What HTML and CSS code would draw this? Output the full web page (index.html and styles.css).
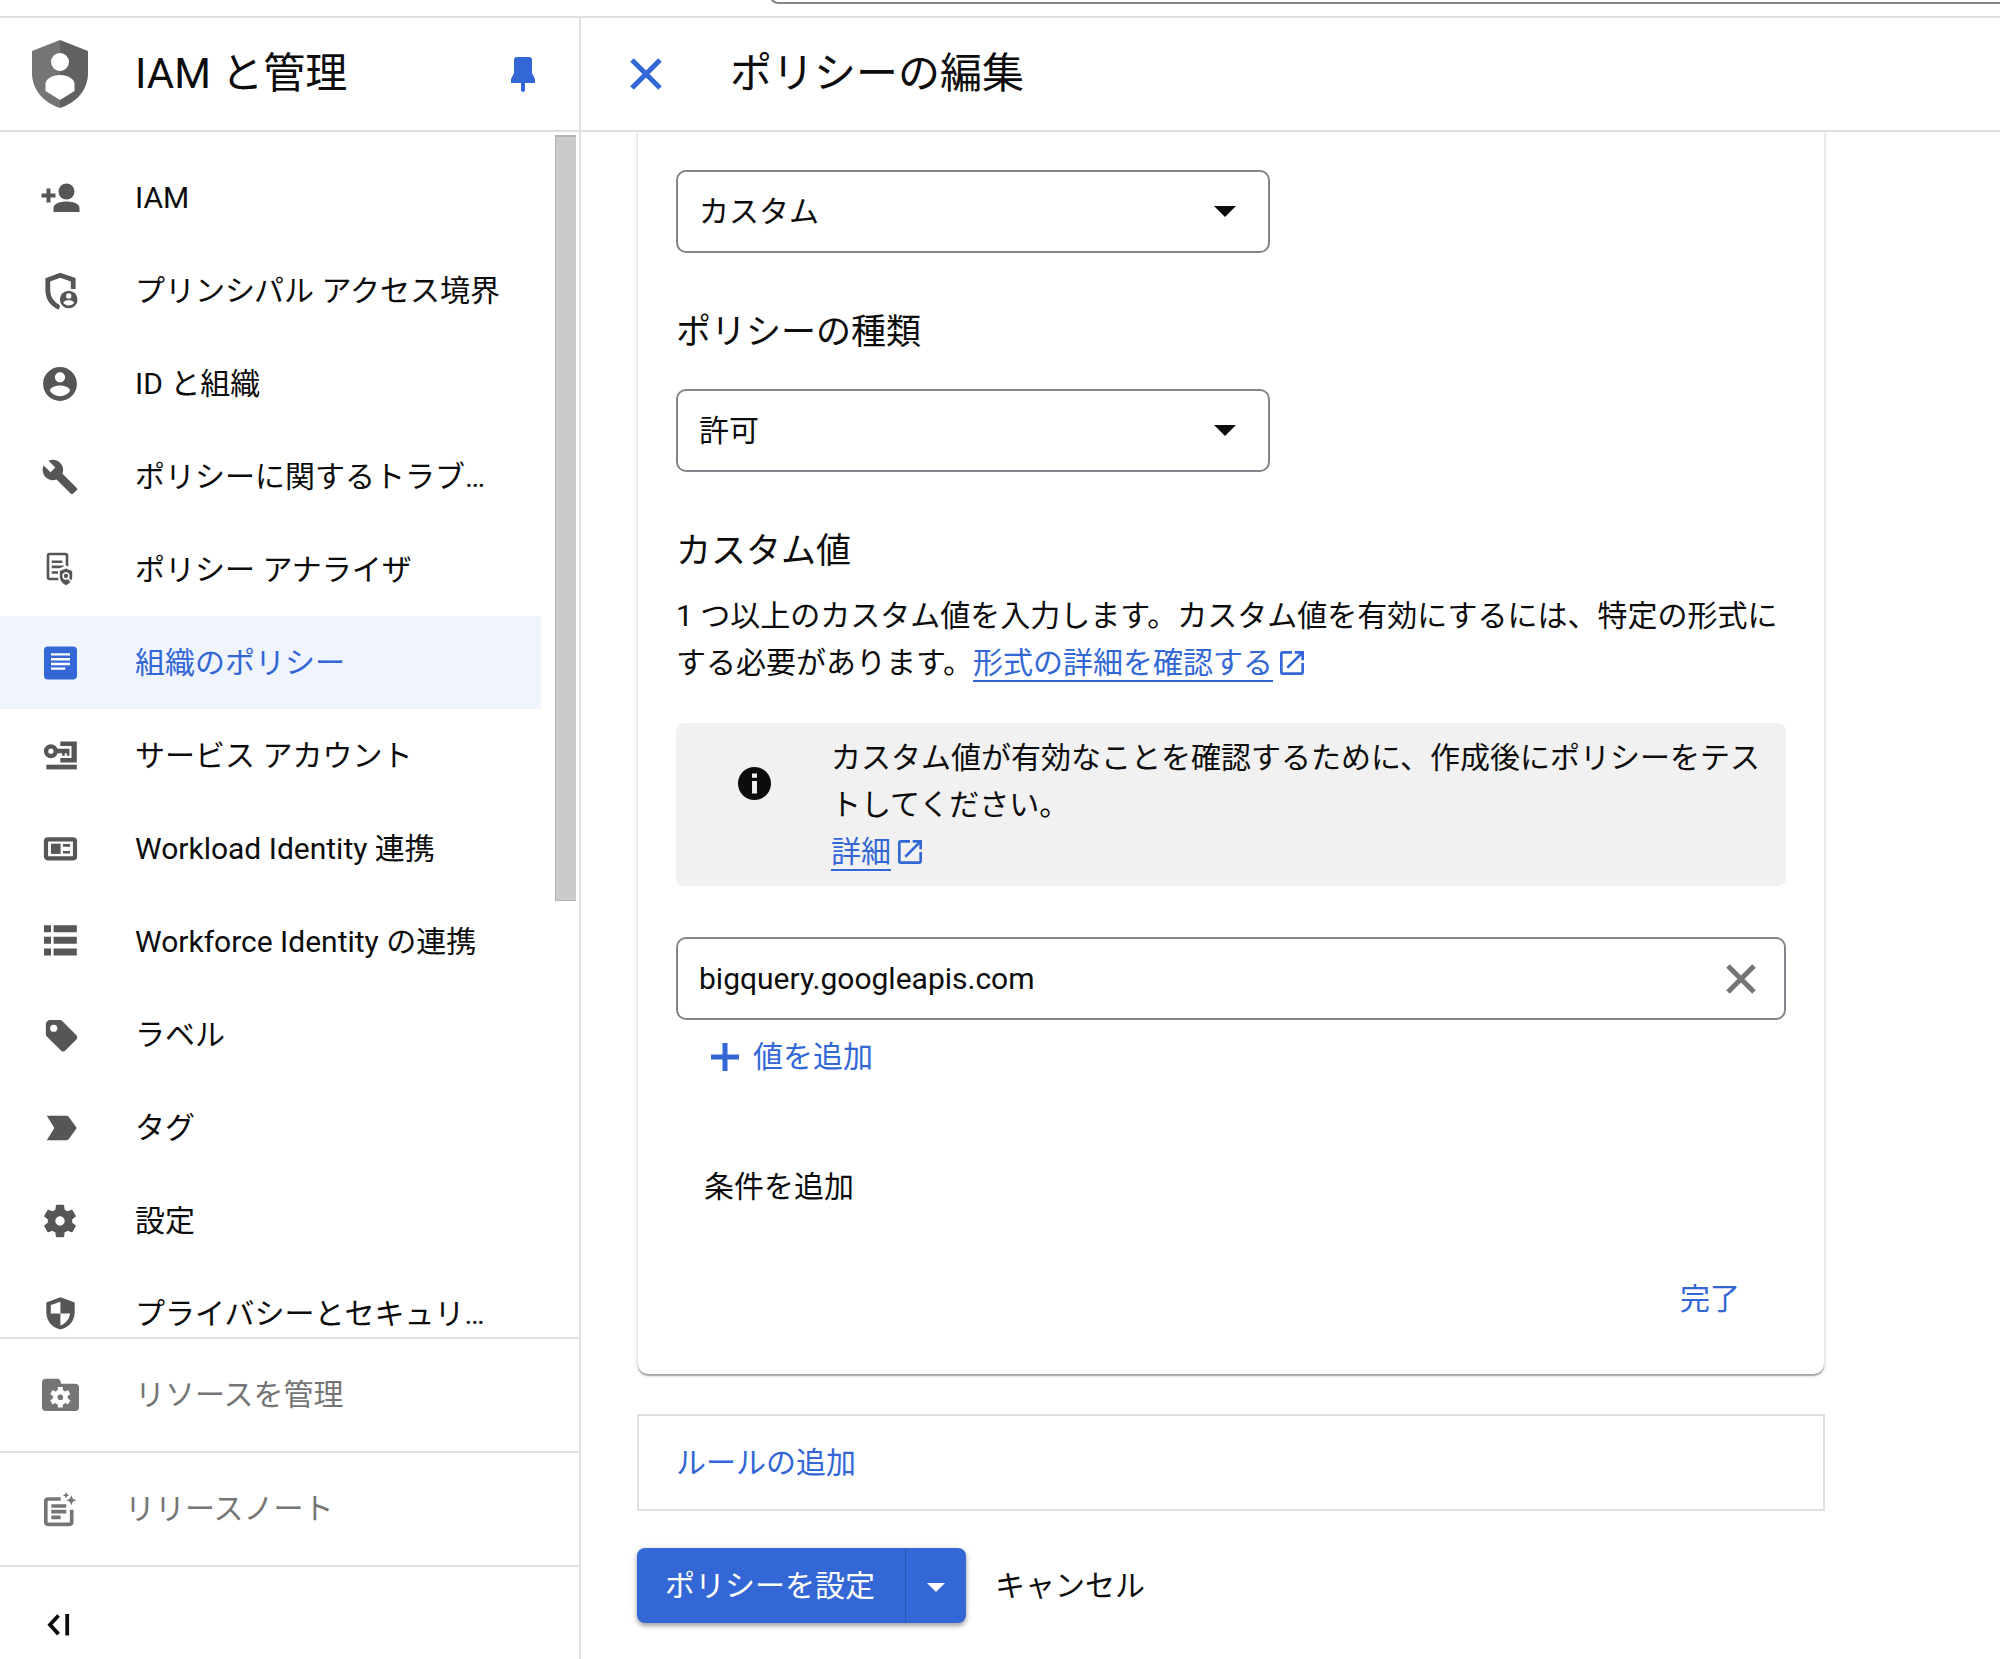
FILE: index.html
```html
<!DOCTYPE html>
<html lang="ja">
<head>
<meta charset="utf-8">
<meta name="viewport" content="width=device-width, initial-scale=1">
<title>ポリシーの編集</title>
<link rel="stylesheet" href="styles.css">
</head>
<body>
<div class="app">
  <header class="topbar">
    <input class="topbar-search" type="search" aria-label="検索">
  </header>
  <div class="columns">
    <aside class="sidebar">
      <div class="sidebar-head">
        <svg class="product-logo" viewBox="0 0 56 68" aria-hidden="true">
          <path fill="#757575" d="M28 0L0 11v22c0 17 12 30 28 35z"/>
          <path fill="#616161" d="M28 0l28 11v22c0 17-12 30-28 35z"/>
          <circle cx="28" cy="22" r="9" fill="#fff"/>
          <path fill="#fff" d="M28 35c8 0 14.500 4 14.500 9v7L28 60l-14.500-9v-7c0-5 6.500-9 14.500-9z"/>
        </svg>
        <h2 class="title">IAM と管理</h2>
        <button class="icon-button pin" type="button" aria-label="固定">
          <svg width="24" height="36" viewBox="0 0 24 36"><path d="M6 1h12c2 0 3 1 3 3v13l3 6v4H14v8l-2 1-2-1v-8H0v-4l3-6V4c0-2 1-3 3-3z"/></svg>
        </button>
      </div>
      <div class="nav-scroll">
        <nav class="nav">
          <a class="nav-item" href="#">
            <svg class="nav-icon" viewBox="0 0 44 44"><path d="M8.500 12.500h4v5h5v4h-5v5h-4v-5h-5v-4h5z"/><ellipse cx="28.500" cy="15.500" rx="8" ry="8"/><path d="M15.500 36v-4c0-4.500 7-6.500 12.900-6.500S41.500 27.500 41.500 32v4z"/></svg>
            <span class="nav-label">IAM</span></a>
          <a class="nav-item" href="#">
            <svg class="nav-icon" viewBox="0 0 44 44"><path fill="none" stroke="currentColor" stroke-width="4.800" d="M21.500 38.500C14 35 9.800 29 9.800 21V10.800l12.400-4.600 13 4.600V20"/><circle cx="30.700" cy="30.500" r="11" fill="#fff"/><circle cx="30.700" cy="30.500" r="8.800"/><circle cx="30.700" cy="27" r="2.700" fill="#fff"/><path fill="#fff" d="M25.200 33.800c1-2 3.500-2.600 5.500-2.600s4.500.600 5.500 2.600c-1.300 1.800-3.200 2.800-5.500 2.800s-4.200-1-5.500-2.800z"/></svg>
            <span class="nav-label">プリンシパル アクセス境界</span></a>
          <a class="nav-item" href="#">
            <svg class="nav-icon" viewBox="-1 -1 26 26"><path d="M12 2C6.480 2 2 6.480 2 12s4.480 10 10 10 10-4.480 10-10S17.520 2 12 2zm0 3c1.660 0 3 1.340 3 3s-1.340 3-3 3-3-1.340-3-3 1.340-3 3-3zm0 14.200c-2.500 0-4.710-1.280-6-3.220.030-1.990 4-3.080 6-3.080 1.990 0 5.970 1.090 6 3.080-1.290 1.940-3.500 3.220-6 3.220z"/></svg>
            <span class="nav-label">ID と組織</span></a>
          <a class="nav-item" href="#">
            <svg class="nav-icon" viewBox="-2 -2 28 28"><path d="M22.700 19l-9.100-9.100c.900-2.300.400-5-1.500-6.900-2-2-5-2.400-7.400-1.300L9 6 6 9 1.600 4.700C.400 7.100.900 10.100 2.900 12.100c1.900 1.900 4.600 2.400 6.900 1.500l9.100 9.100c.400.400 1 .400 1.400 0l2.300-2.300c.500-.400.500-1.100.100-1.400z"/></svg>
            <span class="nav-label">ポリシーに関するトラブ…</span></a>
          <a class="nav-item" href="#">
            <svg class="nav-icon" viewBox="0 0 44 44"><g fill="none" stroke="currentColor" stroke-width="2.600"><rect x="10" y="6" width="19" height="25" rx="1.500"/><path d="M13.700 13.700h10.600M13.700 18.900h12M13.700 24.500h7"/></g><path fill="#fff" d="M28 17.500l8 3.500v8c0 5-4 8.500-8 10.500-4-2-8-5.500-8-10.500v-8z"/><path d="M28 20.500l6.200 2.500v5.500c0 4-2.700 7-6.200 8.800-3.500-1.800-6.200-4.800-6.200-8.800V23z"/><circle cx="28" cy="28" r="2.900" fill="none" stroke="#fff" stroke-width="1.500"/><path stroke="#fff" stroke-width="1.500" d="M30 30l3 3.500"/></svg>
            <span class="nav-label">ポリシー アナライザ</span></a>
          <a class="nav-item nav-item-active" href="#" aria-current="page">
            <svg class="nav-icon" viewBox="0 0 44 44"><rect x="6" y="5.500" width="33" height="33" rx="4"/><path stroke="#fff" stroke-width="2.400" d="M13 13.400h19M13 18.200h19M13 23h19M13 27.600h14.300"/></svg>
            <span class="nav-label">組織のポリシー</span></a>
          <a class="nav-item" href="#">
            <svg class="nav-icon" viewBox="0 0 44 44"><path d="M22.300 7.600h16.500v21H22.300v-4.500h11.200V12H22.300z"/><circle cx="12.900" cy="17.200" r="4.800" fill="none" stroke="currentColor" stroke-width="4.400"/><path d="M18 14.800h13.500v6.900h-2.700v-2.500h-2v2.500h-2.700v-2.500H18z"/><path d="M8.300 30.700h30.500v4.700H8.300z"/></svg>
            <span class="nav-label">サービス アカウント</span></a>
          <a class="nav-item" href="#">
            <svg class="nav-icon" viewBox="0 0 44 44"><rect x="8" y="12.400" width="29" height="19" rx="2" fill="none" stroke="currentColor" stroke-width="4.200"/><path d="M13 16.700h9.600v10.200H13z"/><path stroke="currentColor" stroke-width="2.600" d="M25 18.400h7M25 25.200h7"/></svg>
            <span class="nav-label">Workload Identity 連携</span></a>
          <a class="nav-item" href="#">
            <svg class="nav-icon" viewBox="0 0 44 44"><path d="M6 5.200h7v7H6zM15.600 5.200h23.200v7H15.600zM6 16.700h7v7H6zM15.600 16.700h23.200v7H15.600zM6 28.500h7v7H6zM15.600 28.500h23.200v7H15.600z"/></svg>
            <span class="nav-label">Workforce Identity の連携</span></a>
          <a class="nav-item" href="#">
            <svg class="nav-icon" viewBox="-3 -2.500 28 28"><path d="M21.410 11.580l-9-9C12.050 2.220 11.550 2 11 2H5C3.300 2 2 3.300 2 5v6c0 .550.220 1.050.590 1.420l9 9c.360.360.860.580 1.410.580s1.050-.220 1.410-.590l7-7c.370-.360.590-.860.590-1.410s-.230-1.060-.590-1.420z"/><circle cx="7" cy="7.200" r="2.300" fill="#fff"/></svg>
            <span class="nav-label">ラベル</span></a>
          <a class="nav-item" href="#">
            <svg class="nav-icon" viewBox="-1 -.500 25 25"><path d="M4 19l11 .010c.670 0 1.270-.330 1.630-.840L21 12l-4.370-6.160c-.360-.510-.960-.840-1.630-.840l-11 .010L8.300 12z"/></svg>
            <span class="nav-label">タグ</span></a>
          <a class="nav-item" href="#">
            <svg class="nav-icon" viewBox="-1 -1 26 26"><path fill-rule="evenodd" d="M19.140 12.940c.040-.300.060-.610.060-.940 0-.320-.020-.640-.070-.940l2.030-1.580c.180-.140.230-.410.120-.610l-1.920-3.320c-.120-.220-.370-.290-.590-.220l-2.390.960c-.500-.380-1.030-.700-1.620-.940l-.360-2.540c-.040-.240-.240-.410-.480-.410h-3.840c-.240 0-.430.170-.470.410l-.360 2.540c-.590.240-1.130.570-1.620.940l-2.390-.960c-.220-.080-.470 0-.590.220L2.740 8.870c-.120.210-.080.470.120.610l2.030 1.580c-.050.300-.090.630-.090.940s.020.640.070.940l-2.030 1.580c-.180.140-.230.410-.120.610l1.920 3.320c.120.220.370.290.590.220l2.390-.960c.500.380 1.030.700 1.620.940l.360 2.540c.050.240.240.410.480.410h3.840c.240 0 .440-.170.470-.410l.360-2.540c.590-.240 1.130-.560 1.620-.940l2.390.960c.220.080.470 0 .590-.220l1.920-3.320c.120-.220.070-.470-.120-.610zM12 14.800a2.800 2.800 0 1 1 0-5.600 2.800 2.800 0 0 1 0 5.600z"/></svg>
            <span class="nav-label">設定</span></a>
          <a class="nav-item" href="#">
            <svg class="nav-icon" viewBox="0 0 44 44"><path d="M22.400 5.200l14.300 5.200V20c0 9-6 15.500-14.300 17.500C14 35.500 8.300 29 8.300 20v-9.600z"/><path fill="#fff" d="M22.400 9.800L12.800 13v8.500h9.600zM22.400 21.500h9.600c-.700 6-4.600 10.300-9.600 12z"/></svg>
            <span class="nav-label">プライバシーとセキュリ…</span></a>
        </nav>
        <div class="scroll-track"><div class="scroll-thumb"></div></div>
      </div>
      <a class="side-link" href="#">
        <svg class="nav-icon" viewBox="0 0 44 44"><path d="M8 5.700h11.500c2 0 3.500 2 3.500 5h14.500c2 0 3.500 1.500 3.500 3.500v20.300c0 2-1.500 3.500-3.500 3.500H7.500c-2 0-3.500-1.500-3.500-3.500V9.700c0-2.500 1.500-4 4-4z"/><circle cx="22.300" cy="24.300" r="5.200" fill="none" stroke="#fff" stroke-width="4.800"/><path stroke="#fff" stroke-width="5" d="M22.300 14v4M22.300 30.600v4M13.400 19.200l3.400 2M27.800 27.400l3.400 2M13.400 29.400l3.400-2M27.800 21.200l3.400-2"/></svg>
        <span class="nav-label">リソースを管理</span></a>
      <a class="side-link side-link-notes" href="#">
        <svg class="nav-icon" viewBox="0 0 44 44"><g fill="none" stroke="currentColor" stroke-width="3.700"><path d="M22.700 12H10c-1.500 0-2.200.700-2.200 2.200V35c0 1.500.700 2.300 2.200 2.300h21.500c1.500 0 2.200-.800 2.200-2.300V22.700"/><path d="M13.300 19h15M13.300 24.700h15M13.300 30.300h9.400"/></g><path d="M33.300 8.300l1.500 3.500 3.500 1.500-3.500 1.500-1.500 3.500-1.500-3.500-3.500-1.500 3.500-1.500zM28 5l1 2.300 2.300 1-2.300 1-1 2.300-1-2.300-2.300-1 2.300-1z"/></svg>
        <span class="nav-label">リリースノート</span></a>
      <button class="collapse" type="button" aria-label="ナビゲーションを閉じる">
        <svg class="nav-icon" viewBox="0 0 44 44"><path fill="none" stroke="currentColor" stroke-width="3.800" d="M20.500 12.500l-8.500 9.300 8.500 9.300M29.200 11v21.500"/></svg>
      </button>
    </aside>

    <main class="main">
      <div class="main-head">
        <button class="icon-button" type="button" aria-label="閉じる">
          <svg width="32" height="32" viewBox="0 0 32 32"><path fill="none" stroke="currentColor" stroke-width="5" d="M2 2l28 28M30 2L2 30"/></svg>
        </button>
        <h1 class="title">ポリシーの編集</h1>
      </div>
      <div class="content">
        <section class="card">
          <div class="select-box">
            <select class="select" aria-label="値"><option>カスタム</option></select>
            <svg class="select-arrow" viewBox="0 0 22 11"><path d="M0 0h22L11 11z"/></svg>
          </div>
          <label class="heading" for="policy-type">ポリシーの種類</label>
          <div class="select-box">
            <select class="select" id="policy-type"><option>許可</option></select>
            <svg class="select-arrow" viewBox="0 0 22 11"><path d="M0 0h22L11 11z"/></svg>
          </div>
          <h2 class="heading heading-values" id="values-heading">カスタム値</h2>
          <p class="text">1 つ以上のカスタム値を入力します。カスタム値を有効にするには、特定の形式にする必要があります。<a class="link" href="#">形式の詳細を確認する</a><svg class="external" viewBox="3 3 18 18"><path d="M19 19H5V5h7V3H5a2 2 0 0 0-2 2v14a2 2 0 0 0 2 2h14c1.100 0 2-.900 2-2v-7h-2v7zM14 3v2h3.590l-9.830 9.830 1.410 1.410L19 6.410V10h2V3h-7z"/></svg></p>
          <div class="notice">
            <svg class="info" viewBox="2 2 20 20"><path fill-rule="evenodd" d="M12 2C6.480 2 2 6.480 2 12s4.480 10 10 10 10-4.480 10-10S17.520 2 12 2zm1.500 16h-3v-7.500h3zm0-9.500h-3V6h3z"/></svg>
            <p class="text">カスタム値が有効なことを確認するために、作成後にポリシーをテストしてください。<br><a class="link" href="#">詳細</a><svg class="external" viewBox="3 3 18 18"><path d="M19 19H5V5h7V3H5a2 2 0 0 0-2 2v14a2 2 0 0 0 2 2h14c1.100 0 2-.900 2-2v-7h-2v7zM14 3v2h3.590l-9.830 9.830 1.410 1.410L19 6.410V10h2V3h-7z"/></svg></p>
          </div>
          <div class="value-box">
            <input class="value-input" type="text" value="bigquery.googleapis.com" aria-labelledby="values-heading">
            <button class="icon-button clear" type="button" aria-label="削除">
              <svg width="30" height="30" viewBox="0 0 30 30"><path fill="none" stroke="currentColor" stroke-width="5" d="M2 2l26 26M28 2L2 28"/></svg>
            </button>
          </div>
          <button class="text-button add-value" type="button">
            <svg width="28" height="28" viewBox="0 0 28 28"><path fill="none" stroke="currentColor" stroke-width="5" d="M14 0v28M0 14h28"/></svg>
            値を追加</button>
          <button class="text-button add-condition" type="button">条件を追加</button>
          <button class="text-button done" type="button">完了</button>
        </section>
        <div class="rule-box"><button class="text-button" type="button">ルールの追加</button></div>
        <div class="actions">
          <div class="split">
            <button class="split-main" type="button">ポリシーを設定</button>
            <button class="split-menu" type="button" aria-label="その他の操作"><svg width="18" height="9" viewBox="0 0 18 9"><path d="M0 0h18L9 9z"/></svg></button>
          </div>
          <button class="text-button cancel" type="button">キャンセル</button>
        </div>
      </div>
    </main>
  </div>
</div>
</body>
</html>
```
FILE: styles.css
```css
:root {
  --blue: #3367d6;
  --line: #e0e0e0;
  --outline: #80868b;
  --ink: #0c0c0c;
}

* {
  box-sizing: border-box;
}

body {
  margin: 0;
  background: #fff;
  color: var(--ink);
  font: 400 30px/48px Roboto, "Noto Sans CJK JP", sans-serif;
}

button,
input,
select {
  font: inherit;
  color: inherit;
}

button {
  padding: 0;
  border: 0;
  background: none;
  cursor: pointer;
}

svg {
  display: block;
  flex: none;
  fill: currentColor;
}

h1,
h2,
p {
  margin: 0;
}

.app {
  display: flex;
  flex-direction: column;
  height: 100vh;
  overflow: hidden;
}

/* Top bar */
.topbar {
  display: flex;
  flex: none;
  align-items: flex-end;
  height: 18px;
  padding: 0 0 12px 770px;
  border-bottom: 2px solid var(--line);
  overflow: hidden;
}

.topbar-search {
  flex: 1;
  height: 64px;
  border: 2px solid var(--outline);
  border-right: 0;
  border-radius: 8px 0 0 8px;
  appearance: none;
  background: #fff;
}

.columns {
  display: flex;
  flex: 1;
  min-height: 0;
}

/* Sidebar */
.sidebar {
  display: flex;
  flex: none;
  flex-direction: column;
  width: 581px;
  border-right: 2px solid var(--line);
}

.sidebar-head,
.main-head {
  display: flex;
  flex: none;
  align-items: center;
  height: 114px;
  border-bottom: 2px solid var(--line);
}

.sidebar-head {
  gap: 47px;
  padding: 0 44px 0 32px;
}

.product-logo {
  width: 56px;
  height: 68px;
}

.title {
  font-size: 42px;
  font-weight: 400;
  line-height: 58px;
}

.icon-button {
  color: var(--blue);
}

.pin {
  margin-left: auto;
}

.nav-scroll {
  display: flex;
  flex: 1;
  justify-content: space-between;
  min-height: 0;
  overflow: hidden;
}

.nav {
  width: 541px;
  padding-top: 19px;
}

.nav-item,
.side-link {
  display: flex;
  align-items: center;
  gap: 53px;
  padding-left: 38px;
  color: #565656;
  text-decoration: none;
}

.nav-item {
  height: 93px;
}

.nav-label {
  color: var(--ink);
  white-space: nowrap;
}

.nav-icon {
  width: 44px;
  height: 44px;
}

.nav-item-active {
  background: #f0f4fd;
  color: var(--blue);
}

.nav-item-active .nav-label {
  color: inherit;
}

.scroll-track {
  width: 24px;
  padding: 3px 3px 0 0;
}

.scroll-thumb {
  height: 766px;
  max-height: 64%;
  border: solid #b4b4b4;
  border-width: 2px 0 1px 1px;
  background: #cbcbcb;
}

.side-link {
  flex: none;
  height: 114px;
  border-top: 2px solid var(--line);
  color: #757575;
}

.side-link .nav-label {
  color: inherit;
}

.side-link-notes {
  gap: 43px;
}

.collapse {
  flex: none;
  padding: 36px 38px 12px;
  border-top: 2px solid var(--line);
}

/* Main column */
.main {
  display: flex;
  flex: 1;
  flex-direction: column;
  min-width: 0;
}

.main-head {
  gap: 68px;
  padding-left: 49px;
}

.content {
  flex: 1;
  min-height: 0;
  padding: 0 56px;
  overflow: hidden;
}

.card {
  display: flex;
  flex-direction: column;
  align-items: flex-start;
  max-width: 1186px;
  margin-left: 1px;
  padding: 38px 38px 51px;
  border-radius: 0 0 10px 10px;
  box-shadow: 0 2px 1px rgba(0, 0, 0, .25), 0 1px 4px rgba(0, 0, 0, .22);
}

.select-box {
  display: grid;
  align-items: center;
  width: 100%;
  max-width: 594px;
}

.select,
.select-arrow {
  grid-area: 1 / 1;
}

.select {
  width: 100%;
  height: 83px;
  padding: 0 60px 0 21px;
  border: 2px solid var(--outline);
  border-radius: 10px;
  appearance: none;
  background: #fff;
}

.select-arrow {
  justify-self: end;
  width: 22px;
  height: 11px;
  margin-right: 34px;
  pointer-events: none;
}

.heading {
  margin: 56px 0 32px;
  font-size: 35px;
  font-weight: 400;
}

.heading-values {
  margin-bottom: 16px;
}

.text {
  line-height: 47px;
}

.link {
  color: var(--blue);
  text-decoration: underline 2px;
  text-decoration-skip-ink: none;
  text-underline-offset: 7px;
}

.external {
  display: inline-block;
  width: 24px;
  height: 24px;
  margin-left: 7px;
  color: var(--blue);
  vertical-align: -2px;
}

.notice {
  display: flex;
  gap: 60px;
  align-self: stretch;
  margin-top: 37px;
  padding: 11px 24px 11px 62px;
  border-radius: 8px;
  background: #f1f1f1;
}

.info {
  width: 33px;
  height: 33px;
  margin-top: 33px;
}

.value-box {
  display: flex;
  align-items: center;
  align-self: stretch;
  height: 83px;
  margin-top: 51px;
  padding: 0 28px 0 21px;
  border: 2px solid var(--outline);
  border-radius: 10px;
}

.value-input {
  flex: 1;
  min-width: 0;
  padding: 0;
  border: 0;
  outline: 0;
  background: none;
}

.clear {
  color: #757575;
}

.text-button {
  color: var(--blue);
}

.add-value {
  display: flex;
  align-items: center;
  gap: 14px;
  margin: 13px 0 0 35px;
}

.add-condition {
  margin: 82px 0 0 28px;
  color: var(--ink);
}

.done {
  align-self: flex-end;
  margin: 64px 46px 0 0;
}

.rule-box {
  display: flex;
  align-items: center;
  max-width: 1188px;
  height: 97px;
  margin-top: 40px;
  padding: 0 37px;
  border: 2px solid var(--line);
}

.actions {
  display: flex;
  align-items: center;
  gap: 29px;
  margin-top: 37px;
}

.split {
  display: flex;
  height: 75px;
  border-radius: 8px;
  background: var(--blue);
  box-shadow: 0 3px 4px rgba(0, 0, 0, .3), 0 1px 8px rgba(0, 0, 0, .12);
  color: #fff;
}

.split-main {
  padding: 0 30px 0 28px;
}

.split-menu {
  display: flex;
  align-items: center;
  justify-content: center;
  width: 61px;
  padding-top: 4px;
  border-left: 1px solid #2a56b5;
}

.cancel {
  color: var(--ink);
}
```
